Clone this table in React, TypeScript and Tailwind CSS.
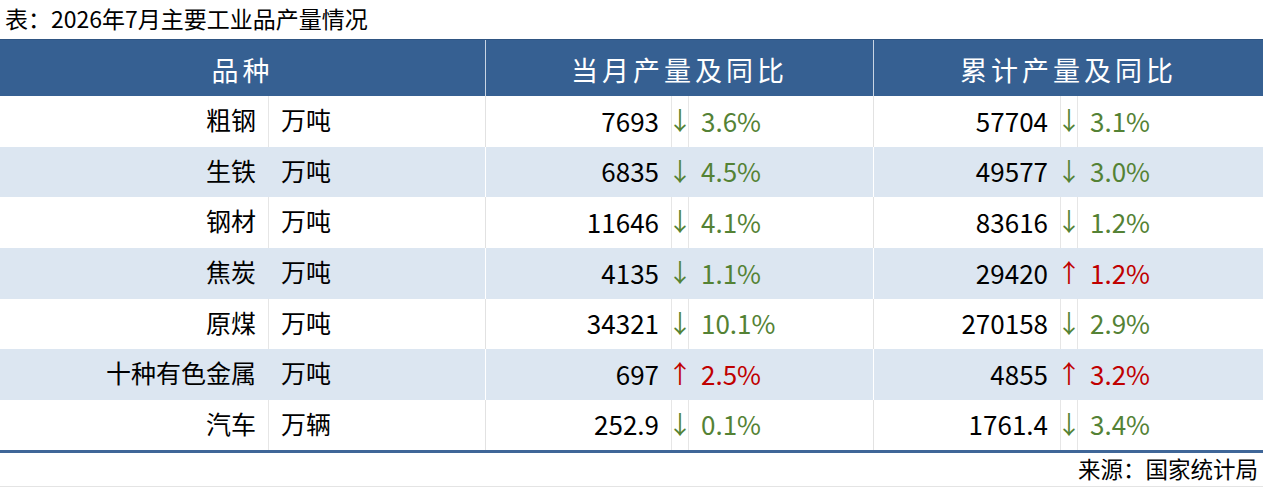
type Trend = "up" | "down";

type Item = {
  name: string;
  unit: string;
  month: string;
  monthDir: Trend;
  monthPct: string;
  total: string;
  totalDir: Trend;
  totalPct: string;
};

const ROWS: Item[] = [
  { name: "粗钢", unit: "万吨", month: "7693", monthDir: "down", monthPct: "3.6%", total: "57704", totalDir: "down", totalPct: "3.1%" },
  { name: "生铁", unit: "万吨", month: "6835", monthDir: "down", monthPct: "4.5%", total: "49577", totalDir: "down", totalPct: "3.0%" },
  { name: "钢材", unit: "万吨", month: "11646", monthDir: "down", monthPct: "4.1%", total: "83616", totalDir: "down", totalPct: "1.2%" },
  { name: "焦炭", unit: "万吨", month: "4135", monthDir: "down", monthPct: "1.1%", total: "29420", totalDir: "up", totalPct: "1.2%" },
  { name: "原煤", unit: "万吨", month: "34321", monthDir: "down", monthPct: "10.1%", total: "270158", totalDir: "down", totalPct: "2.9%" },
  { name: "十种有色金属", unit: "万吨", month: "697", monthDir: "up", monthPct: "2.5%", total: "4855", totalDir: "up", totalPct: "3.2%" },
  { name: "汽车", unit: "万辆", month: "252.9", monthDir: "down", monthPct: "0.1%", total: "1761.4", totalDir: "down", totalPct: "3.4%" },
];

const HEIGHTS = ["h-[51px]", "h-[50px]", "h-[51px]", "h-[51px]", "h-[50px]", "h-[51px]", "h-[50px]"];

const COLS = "grid grid-cols-[269px_217px_186px_17px_185px_187px_17px_185px]";

function tone(d: Trend) {
  return d === "up" ? "text-[#c00000]" : "text-[#548235]";
}

function DataRow({ item, shaded, height }: { item: Item; shaded: boolean; height: string }) {
  const line = shaded ? "border-r border-transparent" : "border-r border-[#e6e6e6]";
  const group = shaded ? "border-r border-white" : "border-r border-[#e2e2e2]";
  return (
    <div className={`${COLS} ${height} ${shaded ? "bg-[#dce6f1]" : "bg-white"} text-[25px] text-black`}>
      <div className={`flex items-center justify-end pr-3 pb-[3px] ${line}`}>{item.name}</div>
      <div className={`flex items-center pl-[12px] pb-[3px] ${group}`}>{item.unit}</div>
      <div className={`flex items-center justify-end pr-3 pb-[3px] text-[26px] ${line}`}>{item.month}</div>
      <div className={`flex items-center justify-center overflow-visible whitespace-nowrap pb-[3px] ${line} ${tone(item.monthDir)}`}>
        {item.monthDir === "up" ? "↑" : "↓"}
      </div>
      <div className={`flex items-center pl-3 pb-[3px] text-[26px] ${group} ${tone(item.monthDir)}`}>{item.monthPct}</div>
      <div className={`flex items-center justify-end pr-3 pb-[3px] text-[26px] ${line}`}>{item.total}</div>
      <div className={`flex items-center justify-center overflow-visible whitespace-nowrap pb-[3px] ${line} ${tone(item.totalDir)}`}>
        {item.totalDir === "up" ? "↑" : "↓"}
      </div>
      <div className={`flex items-center pl-3 pb-[3px] text-[26px] ${tone(item.totalDir)}`}>{item.totalPct}</div>
    </div>
  );
}

export default function App() {
  return (
    <div className="h-[489px] w-[1264px] bg-white font-['Noto_Sans_CJK_SC','Noto_Sans',sans-serif]">
      <div className="flex h-[39px] items-center pl-[5px] pb-[2px] text-[23px] text-black">表：2026年7月主要工业品产量情况</div>

      <div className="w-[1263px]">
        <div className={`${COLS} h-[57px] border-t border-[#2f5582] bg-[#366092] text-[27px] tracking-[4px] text-white`}>
          <div className="col-span-2 flex items-center justify-center border-r border-[#c9d5e4] pt-1">品种</div>
          <div className="col-span-3 flex items-center justify-center border-r border-[#c9d5e4] pt-1">当月产量及同比</div>
          <div className="col-span-3 flex items-center justify-center pt-1">累计产量及同比</div>
        </div>

        {ROWS.map((r, i) => (
          <DataRow key={r.name} item={r} shaded={i % 2 === 1} height={HEIGHTS[i]} />
        ))}

        <div className="h-[3px] bg-[#3f6698]" />
        <div className="flex h-[34px] items-center justify-end border-b border-[#e4e4e4] pr-[5px] pb-[2px] text-[22.5px] text-black">
          来源：国家统计局
        </div>
      </div>
    </div>
  );
}
